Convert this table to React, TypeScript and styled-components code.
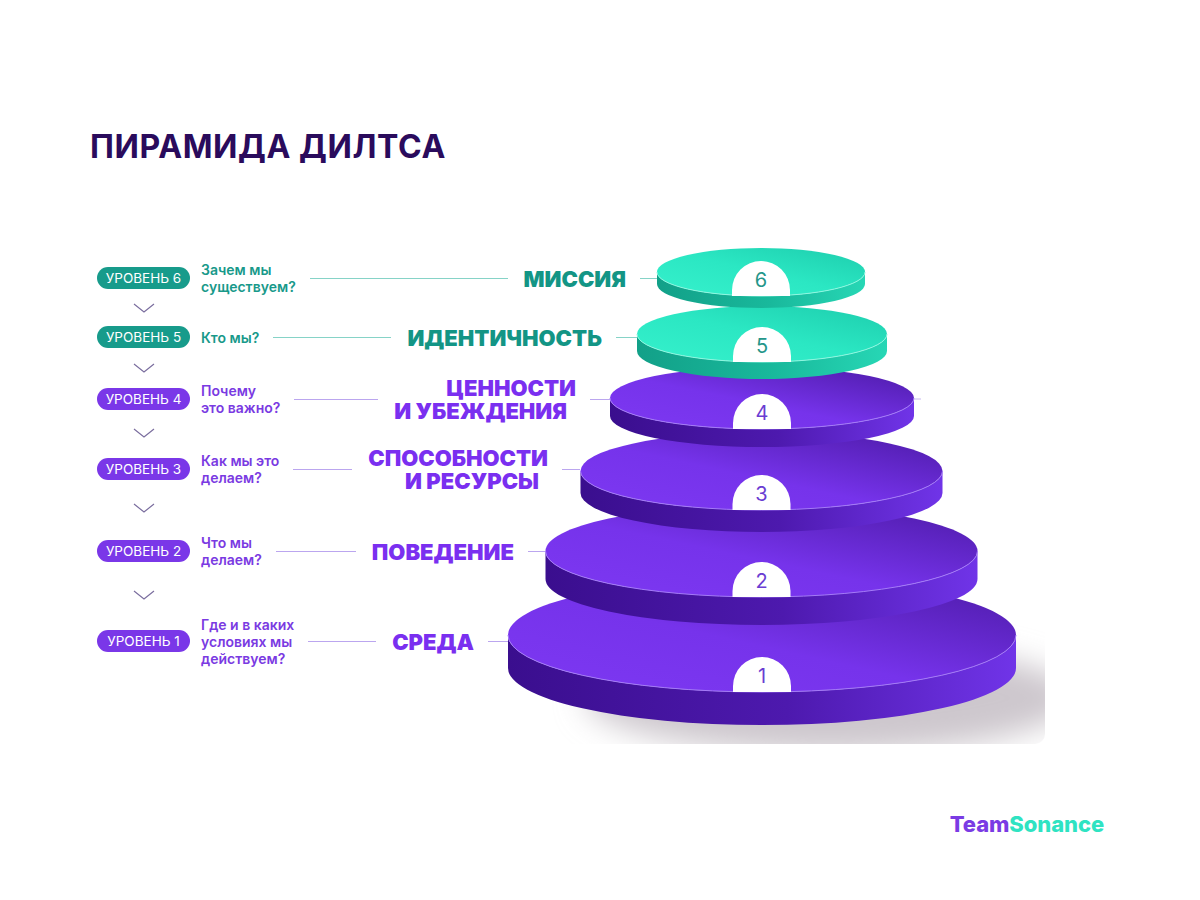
import React from 'react';
import styled, { createGlobalStyle } from 'styled-components';

type Tone = 'teal' | 'violet';

const palette = {
    teal: { pill: '#179b8b', text: '#18998a', label: '#139585', line: '#86d3c7', number: '#24968a' },
    violet: { pill: '#7a37e8', text: '#7a3ae2', label: '#7a2ff0', line: '#bba6ef', number: '#6a3dd2' },
};

interface Level {
    n: number;
    tone: Tone;
    question: string[];
    label: string[];
    width: number;
    tail: number;
    height: number;
    after: number;
}

const levels: Level[] = [
    { n: 6, tone: 'teal', question: ['Зачем мы', 'существуем?'], label: ['МИССИЯ'], width: 560, tail: 17, height: 40, after: 20 },
    { n: 5, tone: 'teal', question: ['Кто мы?'], label: ['ИДЕНТИЧНОСТЬ'], width: 540, tail: 21, height: 38, after: 24 },
    { n: 4, tone: 'violet', question: ['Почему', 'это важно?'], label: ['ЦЕННОСТИ', 'И УБЕЖДЕНИЯ'], width: 513, tail: 20, height: 38, after: 30 },
    { n: 3, tone: 'violet', question: ['Как мы это', 'делаем?'], label: ['СПОСОБНОСТИ', 'И РЕСУРСЫ'], width: 483, tail: 18, height: 42, after: 36 },
    { n: 2, tone: 'violet', question: ['Что мы', 'делаем?'], label: ['ПОВЕДЕНИЕ'], width: 448, tail: 17, height: 50, after: 38 },
    { n: 1, tone: 'violet', question: ['Где и в каких', 'условиях мы', 'действуем?'], label: ['СРЕДА'], width: 411, tail: 20, height: 54, after: 0 },
];

interface Disc {
    n: number;
    tone: Tone;
    cx: number;
    cy: number;
    rx: number;
    ry: number;
    t: number;
}

// bottom to top, drawn in this order
const discs: Disc[] = [
    { n: 1, tone: 'violet', cx: 762, cy: 635, rx: 254, ry: 57, t: 33 },
    { n: 2, tone: 'violet', cx: 761.5, cy: 551, rx: 216, ry: 46, t: 28 },
    { n: 3, tone: 'violet', cx: 761.5, cy: 471, rx: 181, ry: 39, t: 22 },
    { n: 4, tone: 'violet', cx: 762, cy: 398, rx: 152, ry: 31, t: 18 },
    { n: 5, tone: 'teal', cx: 762, cy: 334, rx: 125, ry: 28, t: 17 },
    { n: 6, tone: 'teal', cx: 761, cy: 272, rx: 104, ry: 24, t: 12 },
];

const GlobalStyle = createGlobalStyle`
    body {
        margin: 0;
        background: #ffffff;
        font-family: Inter, 'Noto Sans', sans-serif;
    }
`;

const Page = styled.div`
    width: 1200px;
    height: 900px;
    display: flex;
    flex-direction: column;
    overflow: hidden;
`;

const Title = styled.h1`
    margin: 129px 0 0 90px;
    font-size: 32px;
    line-height: 36px;
    font-weight: 700;
    color: #2a0b5c;
    letter-spacing: 0.6px;
`;

const Diagram = styled.div`
    display: grid;
    margin: 75px 0 0 97px;
    height: 510px;

    & > * {
        grid-area: 1 / 1;
    }
`;

const Pyramid = styled.svg`
    margin-left: 403px;
    display: block;
`;

const Levels = styled.div`
    display: flex;
    flex-direction: column;
    padding-top: 18px;
    align-self: start;
`;

const Row = styled.div<{ $width: number; $height: number }>`
    display: flex;
    align-items: center;
    width: ${(p) => p.$width}px;
    height: ${(p) => p.$height}px;
`;

const Pill = styled.div<{ $tone: Tone }>`
    flex: none;
    width: 93px;
    height: 22px;
    border-radius: 11px;
    background: ${(p) => palette[p.$tone].pill};
    color: #fff;
    font-size: 13.5px;
    display: flex;
    align-items: center;
    justify-content: center;
`;

const Question = styled.div<{ $tone: Tone }>`
    flex: none;
    margin-left: 11px;
    font-size: 14px;
    line-height: 17px;
    font-weight: 600;
    color: ${(p) => palette[p.$tone].text};
`;

const Connector = styled.div<{ $tone: Tone; $width?: number }>`
    height: 1px;
    background: ${(p) => palette[p.$tone].line};
    ${(p) => (p.$width ? `flex: none; width: ${p.$width}px; margin-left: 14px;` : 'flex: 1; margin: 0 16px 0 14px;')}
`;

const Label = styled.div<{ $tone: Tone }>`
    flex: none;
    text-align: right;
    font-size: 22px;
    line-height: 23px;
    font-weight: 900;
    color: ${(p) => palette[p.$tone].label};
    padding-top: 2px;

    span {
        display: block;
    }

    span + span {
        padding-right: 9px;
    }
`;

const Chevron = styled.div<{ $height: number }>`
    width: 93px;
    height: ${(p) => p.$height}px;
    display: flex;
    align-items: center;
    justify-content: center;
`;

const Footer = styled.div`
    margin: 61px 96px 0 0;
    align-self: flex-end;
    font-size: 22px;
    line-height: 26px;
    font-weight: 800;
    letter-spacing: -0.1px;
`;

const Brand = styled.span<{ $tone: Tone }>`
    color: ${(p) => (p.$tone === 'violet' ? '#7a3be4' : '#2fe3c2')};
`;

function DiscShape({ d }: { d: Disc }) {
    const { cx, cy, rx, ry, t, tone } = d;
    const l = cx - rx;
    const r = cx + rx;
    const front = cy + ry;
    const top = front - 35;
    const side = `M ${l} ${cy} A ${rx} ${ry} 0 0 0 ${r} ${cy} L ${r} ${cy + t} A ${rx} ${ry} 0 0 1 ${l} ${cy + t} Z`;
    const rim = `M ${l} ${cy} A ${rx} ${ry} 0 0 0 ${r} ${cy}`;
    const badge = `M ${cx - 29} ${front} L ${cx - 29} ${top + 29} A 29 29 0 0 1 ${cx + 29} ${top + 29} L ${cx + 29} ${front} Z`;
    return (
        <g>
            <path d={side} fill={`url(#side-${tone})`} />
            <ellipse cx={cx} cy={cy} rx={rx} ry={ry} fill={`url(#top-${tone})`} />
            <path d={rim} fill='none' stroke={tone === 'teal' ? '#8ef7e0' : '#a47bf7'} strokeWidth={1} />
            <path d={badge} fill='#ffffff' />
            <text
                x={cx}
                y={top + 26}
                textAnchor='middle'
                fontFamily='Inter, sans-serif'
                fontSize={20}
                fill={palette[tone].number}
            >
                {d.n}
            </text>
        </g>
    );
}

function ChevronIcon() {
    return (
        <svg width='22' height='10' viewBox='0 0 22 10'>
            <path d='M1 1 L11 9 L21 1' fill='none' stroke='#7a6d9e' strokeWidth='1.2' />
        </svg>
    );
}

export default function App() {
    return (
        <Page>
            <GlobalStyle />
            <Title>ПИРАМИДА ДИЛТСА</Title>
            <Diagram>
                <Pyramid width='550' height='510' viewBox='500 240 550 510'>
                    <defs>
                        <linearGradient id='top-violet' x1='0' y1='1' x2='1' y2='0'>
                            <stop offset='0' stopColor='#7d38f2' />
                            <stop offset='0.45' stopColor='#7633eb' />
                            <stop offset='1' stopColor='#4c1aa6' />
                        </linearGradient>
                        <linearGradient id='side-violet' x1='0' y1='0' x2='1' y2='0'>
                            <stop offset='0' stopColor='#3a0e8e' />
                            <stop offset='0.55' stopColor='#4d19ae' />
                            <stop offset='1' stopColor='#7034e8' />
                        </linearGradient>
                        <linearGradient id='top-teal' x1='0' y1='1' x2='1' y2='0'>
                            <stop offset='0' stopColor='#36f1cc' />
                            <stop offset='0.5' stopColor='#2be7c3' />
                            <stop offset='1' stopColor='#1dcdad' />
                        </linearGradient>
                        <linearGradient id='side-teal' x1='0' y1='0' x2='1' y2='0'>
                            <stop offset='0' stopColor='#12a088' />
                            <stop offset='0.55' stopColor='#19b99c' />
                            <stop offset='1' stopColor='#27d7b5' />
                        </linearGradient>
                        <filter id='soft' x='-20%' y='-50%' width='140%' height='200%'>
                            <feGaussianBlur stdDeviation='15' />
                        </filter>
                        <clipPath id='frame'>
                            <rect x='500' y='560' width='545' height='184' rx='10' />
                        </clipPath>
                    </defs>
                    <g clipPath='url(#frame)'>
                        <ellipse cx='830' cy='698' rx='245' ry='55' fill='#cdc7cd' filter='url(#soft)' />
                    </g>
                    {discs.map((d) => (
                        <DiscShape key={d.n} d={d} />
                    ))}
                    <line x1='914' y1='399' x2='921' y2='399' stroke='#c7b8f0' strokeWidth='1' />
                </Pyramid>
                <Levels>
                    {levels.map((lv) => (
                        <React.Fragment key={lv.n}>
                            <Row $width={lv.width} $height={lv.height}>
                                <Pill $tone={lv.tone}>УРОВЕНЬ {lv.n}</Pill>
                                <Question $tone={lv.tone}>
                                    {lv.question.map((q) => (
                                        <div key={q}>{q}</div>
                                    ))}
                                </Question>
                                <Connector $tone={lv.tone} />
                                <Label $tone={lv.tone}>
                                    {lv.label.map((s) => (
                                        <span key={s}>{s}</span>
                                    ))}
                                </Label>
                                <Connector $tone={lv.tone} $width={lv.tail} />
                            </Row>
                            {lv.after > 0 && (
                                <Chevron $height={lv.after}>
                                    <ChevronIcon />
                                </Chevron>
                            )}
                        </React.Fragment>
                    ))}
                </Levels>
            </Diagram>
            <Footer>
                <Brand $tone='violet'>Team</Brand>
                <Brand $tone='teal'>Sonance</Brand>
            </Footer>
        </Page>
    );
}
